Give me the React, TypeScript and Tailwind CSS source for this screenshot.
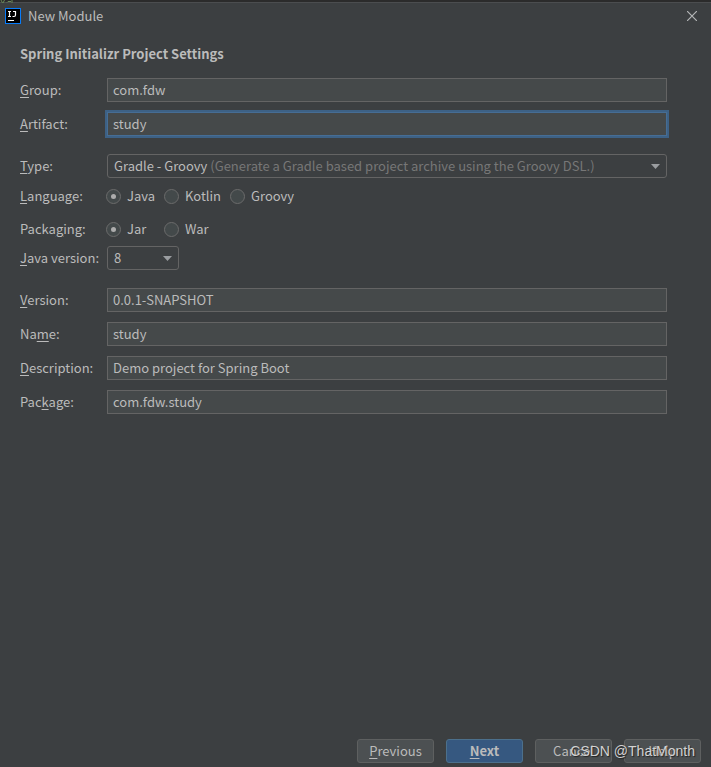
import { useState, type ReactNode } from 'react';

function Mnemonic({ text, at }: { text: string; at: number }) {
  return (
    <>
      {text.slice(0, at)}
      <span className="underline decoration-1 underline-offset-2">{text[at]}</span>
      {text.slice(at + 1)}
    </>
  );
}

function Row({ label, at, id, children }: { label: string; at: number; id: string; children: ReactNode }) {
  return (
    <div className="flex h-6 items-center">
      <label htmlFor={id} className="w-[87px] shrink-0 whitespace-nowrap">
        <Mnemonic text={label} at={at} />
      </label>
      <div className="flex min-w-0 flex-1 items-center">{children}</div>
    </div>
  );
}

function TextField({ label, at, id, value, active = false }: { label: string; at: number; id: string; value: string; active?: boolean }) {
  return (
    <Row label={label} at={at} id={id}>
      <input
        id={id}
        type="text"
        defaultValue={value}
        className={
          'h-6 w-full border bg-[#45494a] px-[5px] pb-[2px] text-[#bbbbbb] outline-none ' +
          (active ? 'border-[#466d94] ring-2 ring-[#3d6185]' : 'border-[#646464]')
        }
      />
    </Row>
  );
}

function Arrow() {
  return (
    <svg viewBox="0 0 9 5" className="pointer-events-none absolute top-[10px] right-[7px] h-[5px] w-[9px]" aria-hidden="true">
      <path d="M0 0h9L4.500 5z" fill="#9a9da0" />
    </svg>
  );
}

function Radios({ name, options, firstId }: { name: string; options: string[]; firstId: string }) {
  const [chosen, setChosen] = useState(options[0]);
  return (
    <div className="flex items-center">
      {options.map((option, i) => (
        <label key={option} className={'flex items-center gap-[6px] ' + (i === 0 ? 'w-[58px]' : 'mr-[10px]')}>
          <input
            id={i === 0 ? firstId : undefined}
            type="radio"
            name={name}
            checked={chosen === option}
            onChange={() => setChosen(option)}
            className="-ml-px grid size-[15px] shrink-0 appearance-none place-items-center rounded-full border border-[#6b6b6b] bg-[#43494a] before:size-[5px] before:rounded-full checked:before:bg-[#adadad]"
          />
          {option}
        </label>
      ))}
    </div>
  );
}

function DialogButton({ text, mnemonic = false, primary = false }: { text: string; mnemonic?: boolean; primary?: boolean }) {
  return (
    <button
      type="button"
      className={
        'h-6 w-[77px] rounded-[3px] border ' +
        (primary ? 'border-[#4c708c] bg-[#365880] font-bold' : 'border-[#5e6060] bg-[#4c5052]')
      }
    >
      {mnemonic ? <Mnemonic text={text} at={0} /> : text}
    </button>
  );
}

export default function App() {
  return (
    <div className="flex min-h-screen flex-col bg-[#3c3f41] font-['Noto_Sans_CJK_SC','Noto_Sans',sans-serif] text-[13px] leading-5 text-[#bbbbbb]">
      <div className="h-[3px] border-b border-[#4b4d4f] bg-[#2b2b2b]">
        <svg viewBox="0 0 16 3" className="h-[3px] w-4" aria-hidden="true">
          <path d="M1 0l1.500 3M4.500 0L3 3M7 2.500l1-1h3M12 0v3" stroke="#6a8759" fill="none" />
        </svg>
      </div>
      <header className="flex h-[26px] items-center gap-[7px] pr-[14px] pl-[5px]">
        <svg viewBox="0 0 16 16" className="size-4" aria-hidden="true">
          <rect width="16" height="16" fill="#087cfa" />
          <rect x="1" y="1" width="14" height="14" fill="#000" />
          <path d="M3 3.500h3M4.500 3.500v5M3 8.500h3M8 3.500h3M10.500 3v4q0 1.500-1.500 1.500H7.500" stroke="#fff" strokeWidth="1.200" fill="none" />
          <path d="M3 12.500h6" stroke="#fff" />
        </svg>
        <h1 className="flex-1">New Module</h1>
        <button type="button" aria-label="Close" className="size-[10px]">
          <svg viewBox="0 0 10 10" className="size-[10px]" aria-hidden="true">
            <path d="M0 0l10 10M10 0L0 10" stroke="#b4b6b7" strokeWidth="1.200" />
          </svg>
        </button>
      </header>

      <main className="flex-1 pt-[15px] pr-11 pl-5">
        <h2 className="mb-[14px] font-bold">Spring Initializr Project Settings</h2>
        <div className="flex flex-col gap-[10px]">
          <TextField label="Group:" at={0} id="group" value="com.fdw" />
          <TextField label="Artifact:" at={0} id="artifact" value="study" active />
        </div>

        <div className="my-[18px]">
          <Row label="Type:" at={0} id="type">
            <div className="relative w-full">
              <select id="type" className="block h-6 w-full appearance-none rounded-[3px] border border-[#646464] bg-[#3c3f41] px-[6px] outline-none">
                <option>Gradle - Groovy</option>
              </select>
              <div className="pointer-events-none absolute inset-0 flex items-center overflow-hidden px-[7px] whitespace-pre" aria-hidden="true">
                <span className="invisible">Gradle - Groovy </span>
                <span className="text-[#777777]">(Generate a Gradle based project archive using the Groovy DSL.)</span>
              </div>
              <Arrow />
            </div>
          </Row>
          <div className="mt-[6px] mb-[9px]">
            <Row label="Language:" at={0} id="language">
              <Radios name="language" options={['Java', 'Kotlin', 'Groovy']} firstId="language" />
            </Row>
          </div>
          <Row label="Packaging:" at={5} id="packaging">
            <Radios name="packaging" options={['Jar', 'War']} firstId="packaging" />
          </Row>
          <div className="mt-[5px]">
            <Row label="Java version:" at={0} id="java-version">
              <div className="relative w-[72px]">
                <select id="java-version" className="block h-6 w-full appearance-none rounded-[3px] border border-[#646464] bg-[#3c3f41] px-[6px] outline-none">
                  <option>8</option>
                </select>
                <Arrow />
              </div>
            </Row>
          </div>
        </div>

        <div className="flex flex-col gap-[10px]">
          <TextField label="Version:" at={0} id="version" value="0.0.1-SNAPSHOT" />
          <TextField label="Name:" at={2} id="name" value="study" />
          <TextField label="Description:" at={0} id="description" value="Demo project for Spring Boot" />
          <TextField label="Package:" at={3} id="package" value="com.fdw.study" />
        </div>
      </main>

      <footer className="relative flex justify-end gap-3 pr-[10px] pb-1">
        <DialogButton text="Previous" mnemonic />
        <DialogButton text="Next" mnemonic primary />
        <DialogButton text="Cancel" />
        <DialogButton text="Help" />
        <span className="pointer-events-none absolute top-[2px] right-4 font-['Liberation_Sans',sans-serif] text-sm text-[#d2d2d2] [text-shadow:1px_1px_1px_#222]">
          CSDN @ThatMonth
        </span>
      </footer>
    </div>
  );
}
